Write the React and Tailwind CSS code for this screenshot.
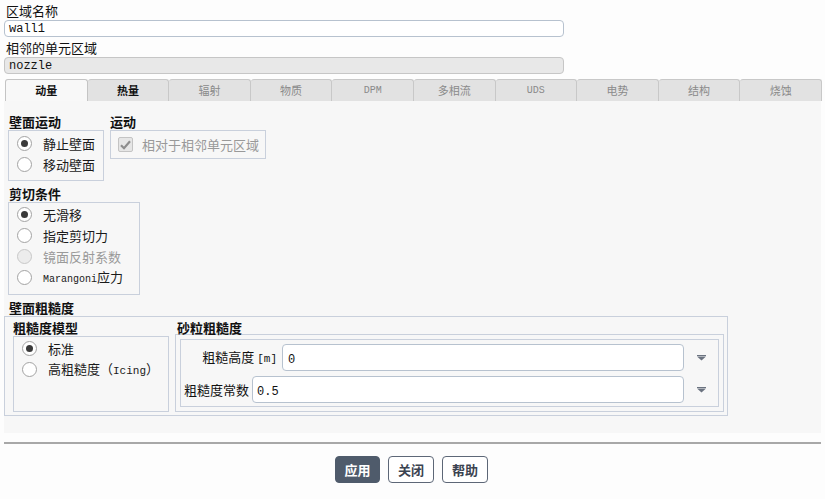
import React from 'react';

const cjk = { fontFamily: '"Noto Sans CJK SC", "Noto Sans", sans-serif' };
const mono = { fontFamily: '"Liberation Mono", "Noto Sans CJK SC", monospace' };

const tabs = [
  { name: '动量', active: true },
  { name: '热量', strong: true },
  { name: '辐射' },
  { name: '物质' },
  { name: 'DPM', ascii: true },
  { name: '多相流' },
  { name: 'UDS', ascii: true },
  { name: '电势' },
  { name: '结构' },
  { name: '烧蚀' },
];

function Radio({ checked, disabled, children }) {
  return (
    <div className="flex items-center h-[21px] pl-[8px]">
      <span
        className={
          'w-[15px] h-[15px] rounded-full border flex items-center justify-center shrink-0 ' +
          (disabled ? 'border-[#c8c8c8] bg-[#ececec]' : 'border-[#a3a3a3] bg-white')
        }
      >
        {checked && <span className="w-[7px] h-[7px] rounded-full bg-[#3a3a3a]" />}
      </span>
      <span className={'ml-[11px] text-[13px] leading-none ' + (disabled ? 'text-[#9a9a9a]' : 'text-[#1a1a1a]')}>
        {children}
      </span>
    </div>
  );
}

function GroupLabel({ children, className = '' }) {
  return <div className={'text-[13px] font-bold leading-[16px] h-[16px] text-[#111] ' + className}>{children}</div>;
}

function Arrow() {
  return (
    <svg width="9" height="6" viewBox="0 0 9 6">
      <rect x="0" y="0" width="9" height="1" fill="#6b7380" />
      <path d="M0 1.5 L9 1.5 L4.5 5.5 Z" fill="#6b7380" />
    </svg>
  );
}

export default function App() {
  return (
    <div className="w-[825px] h-[499px] bg-[#fdfdfd] text-[#111] overflow-hidden" style={cjk}>
      <div className="px-[4px] pt-[2px]">
        <div className="text-[13px] leading-[17px] h-[17px] pl-[2px]">区域名称</div>
        <div className="w-[560px] h-[17px] mt-[1px] border border-[#b7c2cf] rounded-[4px] bg-white flex items-center pl-[4px] text-[12px]" style={mono}>
          wall1
        </div>
        <div className="text-[13px] leading-[17px] h-[17px] mt-[2px] pl-[2px]">相邻的单元区域</div>
        <div className="w-[560px] h-[17px] mt-[1px] border border-[#c6c6c6] rounded-[4px] bg-[#e8e8e8] flex items-center pl-[4px] text-[12px]" style={mono}>
          nozzle
        </div>
      </div>

      <div className="flex ml-[5px] w-[817px] mt-[5px] h-[22px]">
        {tabs.map((t) => (
          <div
            key={t.name}
            className={
              'flex-1 flex items-center justify-center border border-b-0 rounded-t-[3px] text-[11px] ' +
              (t.active
                ? 'bg-[#f8f8f8] border-[#c4c4c4]'
                : 'bg-[#e2e2e2] border-[#c8c8c8] border-l-0 ') +
              (t.active || t.strong ? ' font-bold text-[#111]' : ' text-[#8a8a8a]')
            }
            style={t.ascii ? { ...mono, fontSize: '10px' } : undefined}
          >
            {t.name}
          </div>
        ))}
      </div>

      <div className="ml-[4px] w-[817px] h-[332px] bg-[#f7f7f7] pt-[13px]">
        <div className="flex pl-[4px] gap-[6px]">
          <div>
            <GroupLabel className="pl-[1px]">壁面运动</GroupLabel>
            <div className="w-[96px] h-[51px] border border-[#c9d0dc] pt-[2px]">
              <Radio checked>静止壁面</Radio>
              <Radio>移动壁面</Radio>
            </div>
          </div>
          <div>
            <GroupLabel>运动</GroupLabel>
            <div className="w-[156px] h-[29px] border border-[#c9d0dc] flex items-center pl-[7px]">
              <span className="w-[15px] h-[15px] border border-[#c4c4c4] bg-[#e6e6e6] rounded-[2px] flex items-center justify-center">
                <svg width="11" height="10" viewBox="0 0 11 10">
                  <path d="M1 5.2 L4 8.2 L10 1.2" stroke="#8d8d8d" strokeWidth="2.2" fill="none" />
                </svg>
              </span>
              <span className="ml-[9px] text-[13px] leading-none text-[#999]">相对于相邻单元区域</span>
            </div>
          </div>
        </div>

        <div className="pl-[4px] mt-[5px]">
          <GroupLabel className="pl-[1px]">剪切条件</GroupLabel>
          <div className="w-[132px] h-[93px] border border-[#c9d0dc] pt-[1px]">
            <Radio checked>无滑移</Radio>
            <Radio>指定剪切力</Radio>
            <Radio disabled>镜面反射系数</Radio>
            <Radio>
              <span style={mono} className="text-[10px]">Marangoni</span>应力
            </Radio>
          </div>
        </div>

        <div className="mt-[5px]">
          <GroupLabel className="pl-[5px]">壁面粗糙度</GroupLabel>
          <div className="w-[724px] h-[100px] border border-[#c9d0dc] flex pl-[8px] pt-[3px] gap-[6px]">
            <div>
              <GroupLabel>粗糙度模型</GroupLabel>
              <div className="w-[156px] h-[76px] border border-[#c9d0dc] pt-[1px]">
                <Radio checked>标准</Radio>
                <Radio>
                  高粗糙度（<span style={mono} className="text-[11px]">Icing</span>）
                </Radio>
              </div>
            </div>
            <div>
              <GroupLabel className="pl-[2px]">砂粒粗糙度</GroupLabel>
              <div className="w-[549px] h-[78px] -mt-[2px] border border-[#c9d0dc] p-[4px]">
                <div className="h-[68px] border border-[#c9d0dc] pt-[4px] flex flex-col gap-[5px]">
                  <div className="flex items-center justify-end">
                    <span className="text-[13px] mr-[5px]">
                      粗糙高度 <span style={mono} className="text-[11px]">[m]</span>
                    </span>
                    <div className="w-[402px] h-[27px] border border-[#b7c2cf] rounded-[4px] bg-white flex items-center pl-[5px] pt-[4px] text-[12px]" style={mono}>
                      0
                    </div>
                    <div className="w-[34px] flex justify-center">
                      <Arrow />
                    </div>
                  </div>
                  <div className="flex items-center justify-end">
                    <span className="text-[13px] mr-[3px]">粗糙度常数</span>
                    <div className="w-[432px] h-[27px] border border-[#b7c2cf] rounded-[4px] bg-white flex items-center pl-[4px] pt-[4px] text-[12px]" style={mono}>
                      0.5
                    </div>
                    <div className="w-[34px] flex justify-center">
                      <Arrow />
                    </div>
                  </div>
                </div>
              </div>
            </div>
          </div>
        </div>
      </div>

      <div className="ml-[4px] w-[817px] h-[2px] bg-[#a8a8a8] mt-[9px]" />

      <div className="flex justify-center gap-[8px] mt-[12px] pr-[2px]">
        <button className="w-[45px] h-[27px] rounded-[4px] bg-[#4f5b6b] border border-[#4f5b6b] text-white text-[13px] font-bold">
          应用
        </button>
        <button className="w-[46px] h-[27px] rounded-[4px] bg-white border border-[#5d6777] text-[#3b4350] text-[13px] font-bold">
          关闭
        </button>
        <button className="w-[46px] h-[27px] rounded-[4px] bg-white border border-[#5d6777] text-[#3b4350] text-[13px] font-bold">
          帮助
        </button>
      </div>
    </div>
  );
}
